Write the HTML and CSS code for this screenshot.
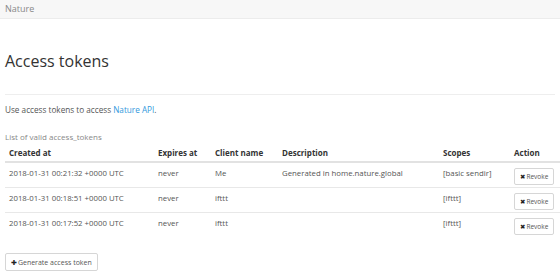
FILE: index.html
```html
<!DOCTYPE html>
<html lang="en">
<head>
  <meta charset="UTF-8">
  <title>Access tokens</title>
  <link rel="stylesheet" href="styles.css">
</head>
<body>
  <div class="navbar">
    <a class="brand" href="#">Nature</a>
  </div>

  <div class="container">
    <div class="page-header">
      <h1>Access tokens</h1>
    </div>

    <p class="intro">Use access tokens to access <a href="#">Nature API</a>.</p>

    <table class="tokens">
      <caption>List of valid access_tokens</caption>
      <thead>
        <tr>
          <th class="col-created">Created at</th>
          <th class="col-expires">Expires at</th>
          <th class="col-client">Client name</th>
          <th class="col-desc">Description</th>
          <th class="col-scopes">Scopes</th>
          <th class="col-action">Action</th>
        </tr>
      </thead>
      <tbody>
        <tr>
          <td>2018-01-31 00:21:32 +0000 UTC</td>
          <td>never</td>
          <td>Me</td>
          <td>Generated in home.nature.global</td>
          <td>[basic sendir]</td>
          <td><button class="btn btn-sm"><span class="icon">✖</span>Revoke</button></td>
        </tr>
        <tr>
          <td>2018-01-31 00:18:51 +0000 UTC</td>
          <td>never</td>
          <td>ifttt</td>
          <td></td>
          <td>[ifttt]</td>
          <td><button class="btn btn-sm"><span class="icon">✖</span>Revoke</button></td>
        </tr>
        <tr>
          <td>2018-01-31 00:17:52 +0000 UTC</td>
          <td>never</td>
          <td>ifttt</td>
          <td></td>
          <td>[ifttt]</td>
          <td><button class="btn btn-sm"><span class="icon">✖</span>Revoke</button></td>
        </tr>
      </tbody>
    </table>

    <button class="btn btn-generate"><span class="icon">✚</span>Generate access token</button>
  </div>
</body>
</html>
```

FILE: styles.css
```css
body {
  margin: 0;
  font-family: "Open Sans", "DejaVu Sans", sans-serif;
  font-size: 8px;
  line-height: 1.43;
  color: #555;
  background-color: #fff;
}

a {
  color: #3399dd;
  text-decoration: none;
}

.navbar {
  height: 18px;
  background-color: #f7f7f7;
  border-bottom: 1px solid #ececec;
  padding: 0 5px;
}
.navbar .brand {
  display: inline-block;
  color: #888;
  font-size: 9px;
  line-height: 18px;
}

.container {
  padding: 0 5px;
}

.page-header {
  margin-top: 34px;
  padding-bottom: 23px;
  border-bottom: 1px solid #eee;
}
.page-header h1 {
  margin: 0;
  font-size: 16px;
  font-weight: 400;
  line-height: 1.1;
  color: #333;
}

.intro {
  margin: 9px 0 0 0;
  font-size: 8.2px;
}

/* table */
.tokens {
  width: 556px;
  table-layout: fixed;
  border-collapse: collapse;
  margin-top: 16px;
}
.tokens caption {
  text-align: left;
  color: #888;
  padding-bottom: 1px;
}
.tokens th {
  text-align: left;
  color: #333;
  font-weight: 700;
  padding: 3px 4px;
  border-bottom: 2px solid #e2e2e2;
}
.tokens td {
  font-size: 7.8px;
  padding: 5px 4px 2px 4px;
  height: 17px;
  vertical-align: top;
  border-top: 1px solid #e8e8e8;
}
.tokens tbody tr:first-child td {
  border-top: none;
}

.col-created { width: 141px; }
.col-expires { width: 49px; }
.col-client { width: 59px; }
.col-desc { width: 153px; }
.col-scopes { width: 63px; }

.btn {
  font-family: inherit;
  color: #555;
  background-color: #fff;
  border: 1px solid #d6d6d6;
  border-radius: 2px;
  cursor: pointer;
}
.btn .icon {
  color: #222;
  font-family: "DejaVu Sans", sans-serif;
  margin-right: 1px;
}
.btn-sm {
  font-size: 6.5px;
  padding: 2px 5px;
  line-height: 1.43;
  height: 17px;
  width: 40px;
}
.btn-generate {
  margin-top: 16px;
  font-size: 7px;
  padding: 3px 5px;
  height: 18px;
}
```
